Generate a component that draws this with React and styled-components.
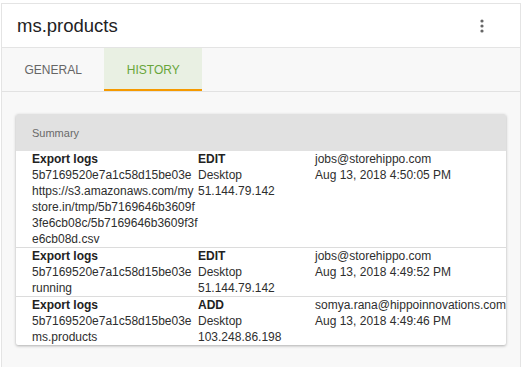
import React from 'react';
import styled, { createGlobalStyle } from 'styled-components';

const GlobalStyle = createGlobalStyle`
  * {
    box-sizing: border-box;
  }
  body {
    margin: 0;
    background: #ffffff;
    font-family: 'Liberation Sans', Arial, sans-serif;
  }
`;

const rows = [
  {
    type: 'Export logs',
    id: '5b7169520e7a1c58d15be03e',
    detail:
      'https://s3.amazonaws.com/mystore.in/tmp/5b7169646b3609f3fe6cb08c/5b7169646b3609f3fe6cb08d.csv',
    action: 'EDIT',
    device: 'Desktop',
    ip: '51.144.79.142',
    user: 'jobs@storehippo.com',
    date: 'Aug 13, 2018 4:50:05 PM',
  },
  {
    type: 'Export logs',
    id: '5b7169520e7a1c58d15be03e',
    detail: 'running',
    action: 'EDIT',
    device: 'Desktop',
    ip: '51.144.79.142',
    user: 'jobs@storehippo.com',
    date: 'Aug 13, 2018 4:49:52 PM',
  },
  {
    type: 'Export logs',
    id: '5b7169520e7a1c58d15be03e',
    detail: 'ms.products',
    action: 'ADD',
    device: 'Desktop',
    ip: '103.248.86.198',
    user: 'somya.rana@hippoinnovations.com',
    date: 'Aug 13, 2018 4:49:46 PM',
  },
];

const App = () => {
  return (
    <>
      <GlobalStyle />
      <Card>
        <Header>
          <Title>ms.products</Title>
          <MenuButton>
            <svg width="4" height="14" viewBox="0 0 4 14">
              <circle cx="2" cy="2" r="1.6" fill="#666" />
              <circle cx="2" cy="7" r="1.6" fill="#666" />
              <circle cx="2" cy="12" r="1.6" fill="#666" />
            </svg>
          </MenuButton>
        </Header>
        <Tabs>
          <Tab>GENERAL</Tab>
          <Tab active>HISTORY</Tab>
        </Tabs>
        <Content>
          <Table>
            <TableHead>Summary</TableHead>
            {rows.map((row, i) => (
              <Row key={i}>
                <Cell wide>
                  <Strong>{row.type}</Strong>
                  <div>{row.id}</div>
                  <div>{row.detail}</div>
                </Cell>
                <Cell mid>
                  <Strong>{row.action}</Strong>
                  <div>{row.device}</div>
                  <div>{row.ip}</div>
                </Cell>
                <Cell>
                  <div>{row.user}</div>
                  <div>{row.date}</div>
                </Cell>
              </Row>
            ))}
          </Table>
        </Content>
      </Card>
    </>
  );
};

const Card = styled.div`
  margin: 3px 1px 0 1px;
  border: 1px solid #e4e4e4;
  border-bottom: none;
  background: #fff;
  height: 364px;
  display: flex;
  flex-direction: column;
`;

const Header = styled.div`
  height: 44px;
  flex: none;
  display: flex;
  align-items: center;
  justify-content: space-between;
  padding: 0 36px 0 15px;
  border-bottom: 1px solid #e4e4e4;
`;

const Title = styled.div`
  font-size: 18.5px;
  color: #222;
  margin-top: 1px;
`;

const MenuButton = styled.div`
  display: flex;
  align-items: center;
`;

const Tabs = styled.div`
  display: flex;
  flex: none;
  height: 44px;
  background: #f8f8f8;
  border-bottom: 1px solid #e2e2e2;
`;

const Tab = styled.div`
  padding: 0 22.5px;
  display: flex;
  align-items: center;
  font-size: 12px;
  color: ${(p) => (p.active ? '#68a53a' : '#666')};
  background: ${(p) => (p.active ? '#e9f0e3' : 'transparent')};
  border-bottom: 2px solid ${(p) => (p.active ? '#f59a00' : 'transparent')};
  padding-top: 2px;
`;

const Content = styled.div`
  flex: 1;
  background: #f8f8f8;
  padding: 22px 14px 0 14px;
`;

const Table = styled.div`
  background: #fff;
  box-shadow: 0 1px 3px rgba(0, 0, 0, 0.3);
  border-radius: 2px;
  overflow: hidden;
`;

const TableHead = styled.div`
  height: 37px;
  background: #e1e1e1;
  display: flex;
  align-items: center;
  padding-left: 16px;
  font-size: 11px;
  color: #6a6a6a;
`;

const Row = styled.div`
  display: flex;
  padding-left: 16px;
  font-size: 12px;
  line-height: 16px;
  color: #2e2e2e;
  & + & {
    border-top: 1px solid #dcdcdc;
  }
`;

const Cell = styled.div`
  width: ${(p) => (p.wide ? '166px' : p.mid ? '117px' : 'auto')};
  flex: ${(p) => (p.wide || p.mid ? 'none' : '1')};
  word-break: break-all;
`;

const Strong = styled.div`
  font-weight: bold;
  color: #222;
`;

export default App;
